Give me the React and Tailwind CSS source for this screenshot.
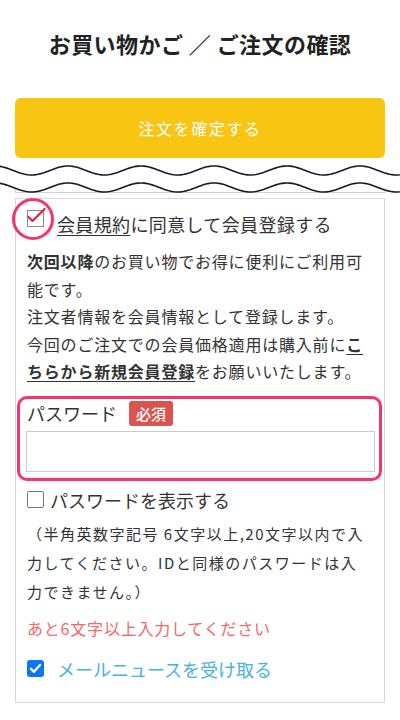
import React from "react";

const font = { fontFamily: '"Noto Sans CJK JP", "Noto Sans", sans-serif' };

function wavePath(cy, amp) {
  let d = "";
  for (let x = -2; x <= 402; x += 2) {
    const y = cy - amp * Math.cos((2 * Math.PI * (x - 68)) / 73);
    d += (x === -2 ? "M" : "L") + x + " " + y.toFixed(2) + " ";
  }
  return d;
}

function CutMark() {
  return (
    <svg width="400" height="40" viewBox="0 0 400 40" className="block">
      <line x1="15.5" y1="30" x2="15.5" y2="34.5" stroke="#d4d4d4" />
      <line x1="384.5" y1="30" x2="384.5" y2="34.5" stroke="#d4d4d4" />
      <line x1="15" y1="34.5" x2="385" y2="34.5" stroke="#d4d4d4" />
      <path d={wavePath(12.5, 4.5)} fill="none" stroke="#1a1a1a" strokeWidth="1.6" />
      <path d={wavePath(29.5, 4.5)} fill="none" stroke="#1a1a1a" strokeWidth="1.6" />
    </svg>
  );
}

export default function App() {
  return (
    <div className="min-h-screen bg-white text-[#333]" style={font}>
      <div className="px-[15px] pt-[27px]">
        <h1 className="text-center text-[22px] leading-[32px] font-bold text-[#222] tracking-[0.02em]">
          お買い物かご ／ ご注文の確認
        </h1>
        <button className="mt-[39px] w-full h-[60px] rounded-[6px] bg-[#f8c513] text-white text-[16px] tracking-[0.1em]">
          注文を確定する
        </button>
      </div>

      <CutMark />

      <div className="mx-[15px] border border-[#d9d9d9] px-[11px] pt-[9px] pb-[19px]">
        {/* 会員登録 */}
        <div className="relative flex items-start">
          <div className="absolute left-[-15px] top-[-10px] w-[42px] h-[42px] rounded-full border-[3.5px] border-[#f5346e]" />
          <svg width="20" height="22" viewBox="0 0 20 22" className="shrink-0 mt-[-1px]">
            <rect x="0.5" y="3.5" width="16" height="16" fill="white" stroke="#8a8a8a" />
            <path d="M1.5 10 L5.5 14 L17.5 2" fill="none" stroke="#e8203a" strokeWidth="2.2" strokeLinecap="round" strokeLinejoin="round" />
          </svg>
          <p className="ml-[10px] text-[18px] leading-[32px] tracking-[0.02em]">
            <span className="underline underline-offset-[3px]">会員規約</span>に同意して会員登録する
          </p>
        </div>

        <p className="mt-[8px] text-[16px] leading-[27.5px] tracking-[0.05em]">
          <span className="font-bold">次回以降</span>のお買い物でお得に便利にご利用可能です。
          <br />
          注文者情報を会員情報として登録します。
          <br />
          今回のご注文での会員価格適用は購入前に
          <span className="font-bold underline underline-offset-[3px]">こちらから新規会員登録</span>
          をお願いいたします。
        </p>

        {/* パスワード */}
        <div className="mt-[10px] -ml-[10px] -mr-[9px] border-[3px] border-[#f5346e] rounded-[10px] pl-[6px] pr-[4px] pt-[2px] pb-[6px]">
          <div className="flex items-center h-[25px]">
            <span className="ml-[1px] text-[18px] leading-[25px]">パスワード</span>
            <span className="ml-[12px] h-[25px] px-[7px] rounded-[3px] bg-[#d9534f] text-white text-[15px] leading-[25px] font-medium">
              必須
            </span>
          </div>
          <input type="password" className="mt-[5px] block w-full h-[41px] border border-[#cccccc] bg-white outline-none" />
        </div>

        <label className="mt-[5px] flex items-center h-[28px]">
          <span className="shrink-0 w-[17px] h-[17px] border border-[#777] rounded-[2px] bg-white" />
          <span className="ml-[6px] text-[18px] leading-[28px]">パスワードを表示する</span>
        </label>

        <p className="mt-[5px] text-[15px] leading-[29px] tracking-[0.1em]">
          （半角英数字記号 6文字以上,20文字以内で入力してください。IDと同様のパスワードは入力できません。）
        </p>

        <p className="mt-[10px] text-[16px] leading-[24px] tracking-[0.05em] text-[#f26868]">
          あと6文字以上入力してください
        </p>

        <label className="mt-[15px] flex items-center h-[28px]">
          <span className="shrink-0 w-[17px] h-[17px] rounded-[3px] bg-[#0b75f5] flex items-center justify-center">
            <svg width="13" height="13" viewBox="0 0 13 13">
              <path d="M2 6.8 L5 9.8 L11 3" fill="none" stroke="white" strokeWidth="2.4" strokeLinecap="round" strokeLinejoin="round" />
            </svg>
          </span>
          <span className="ml-[13px] text-[18px] leading-[28px] text-[#45b4de]">メールニュースを受け取る</span>
        </label>
      </div>
    </div>
  );
}
